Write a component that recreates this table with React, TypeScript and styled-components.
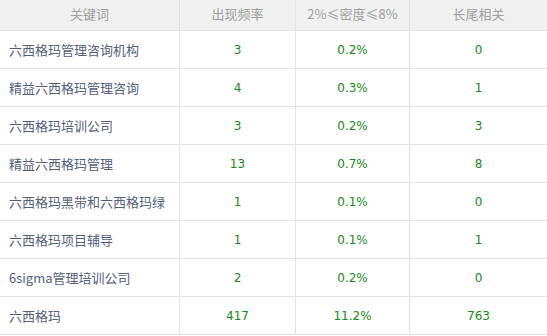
import React from "react";
import styled, { createGlobalStyle } from "styled-components";

const Global = createGlobalStyle`
  html, body { margin: 0; padding: 0; background: #fff; }
  body { font-family: "Noto Sans CJK SC", "Liberation Sans", sans-serif; }
`;

const Grid = styled.div`
  width: 547px;
  display: grid;
  grid-template-columns: 180px 116px 114px 137px;
  grid-auto-rows: 38px;
  grid-template-rows: 31px;
  font-size: 13px;
  line-height: 16px;
`;

const HeadCell = styled.div`
  box-sizing: border-box;
  display: flex;
  align-items: center;
  justify-content: center;
  padding-bottom: 2px;
  background: #f0f0f0;
  color: #a0a0a0;
  border-bottom: 1px solid #e3e3e3;
  border-right: 1px solid #e3e3e3;
  &:nth-child(4) { border-right: none; }
`;

const Cell = styled.div<{ $kw?: boolean; $last?: boolean }>`
  box-sizing: border-box;
  display: flex;
  align-items: center;
  justify-content: ${(p) => (p.$kw ? "flex-start" : "center")};
  padding-left: ${(p) => (p.$kw ? "9px" : "0")};
  color: ${(p) => (p.$kw ? "#535f80" : "#178a17")};
  font-family: ${(p) =>
    p.$kw
      ? `"Noto Sans CJK SC", sans-serif`
      : `"DejaVu Sans", "Noto Sans CJK SC", sans-serif`};
  font-size: ${(p) => (p.$kw ? "13px" : "12px")};
  border-bottom: 1px solid #e3e3e3;
  border-right: ${(p) => (p.$last ? "none" : "1px solid #e3e3e3")};
  white-space: nowrap;
`;

const rows: [string, string, string, string][] = [
  ["六西格玛管理咨询机构", "3", "0.2%", "0"],
  ["精益六西格玛管理咨询", "4", "0.3%", "1"],
  ["六西格玛培训公司", "3", "0.2%", "3"],
  ["精益六西格玛管理", "13", "0.7%", "8"],
  ["六西格玛黑带和六西格玛绿", "1", "0.1%", "0"],
  ["六西格玛项目辅导", "1", "0.1%", "1"],
  ["6sigma管理培训公司", "2", "0.2%", "0"],
  ["六西格玛", "417", "11.2%", "763"],
];

export default function App() {
  return (
    <>
      <Global />
      <Grid>
        <HeadCell>关键词</HeadCell>
        <HeadCell>出现频率</HeadCell>
        <HeadCell>2%≤密度≤8%</HeadCell>
        <HeadCell>长尾相关</HeadCell>
        {rows.map((r) => (
          <React.Fragment key={r[0]}>
            <Cell $kw>{r[0]}</Cell>
            <Cell>{r[1]}</Cell>
            <Cell>{r[2]}</Cell>
            <Cell $last>{r[3]}</Cell>
          </React.Fragment>
        ))}
      </Grid>
    </>
  );
}
